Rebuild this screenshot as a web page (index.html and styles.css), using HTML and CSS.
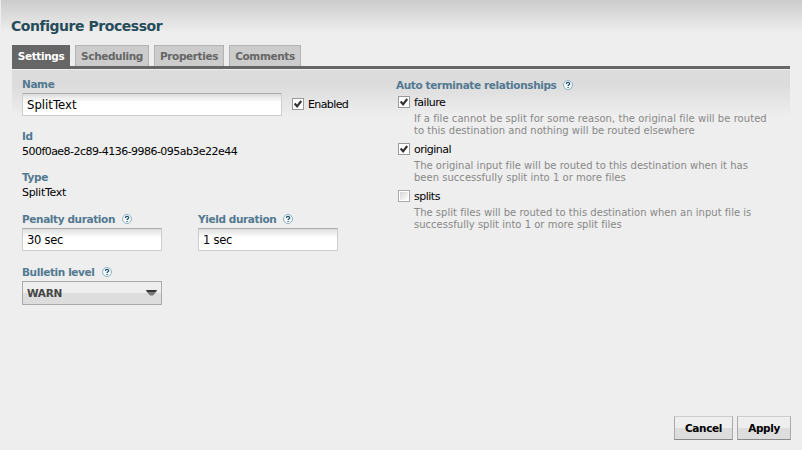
FILE: index.html
```html
<!DOCTYPE html>
<html lang="en">
<head>
<meta charset="utf-8">
<title>Configure Processor</title>
<link rel="stylesheet" href="styles.css">
</head>
<body>
<svg class="defs" aria-hidden="true">
  <symbol id="help" viewBox="0 0 10 10">
    <circle cx="5" cy="5" r="4.5" fill="#f4f9fb" stroke="#8fb2c3"/>
    <path d="M3.4 3.9C3.4 1.9 6.7 1.9 6.7 3.7C6.7 4.7 5.1 4.8 5.1 6" fill="none" stroke="#1f5068" stroke-width="1.2"/>
    <path d="M4.5 7h1.2v1.1H4.5z" fill="#1f5068"/>
  </symbol>
  <symbol id="check" viewBox="0 0 12 12">
    <path d="M2.6 5.6L5.1 8.3L9.2 3" fill="none" stroke="#333" stroke-width="2.2"/>
  </symbol>
</svg>
<main class="dialog">
  <h1 class="title">Configure Processor</h1>
  <nav class="tabs">
    <span class="tab tab-settings active">Settings</span>
    <span class="tab tab-scheduling">Scheduling</span>
    <span class="tab tab-properties">Properties</span>
    <span class="tab tab-comments">Comments</span>
  </nav>
  <div class="panel">
    <section class="left">
      <div class="label">Name</div>
      <div class="name-row">
        <div class="input name-input">SplitText</div>
        <span class="checkbox"><svg><use href="#check"/></svg></span>
        <span class="enabled">Enabled</span>
      </div>
      <div class="readonly">
        <div class="label">Id</div>
        <div class="value">500f0ae8-2c89-4136-9986-095ab3e22e44</div>
      </div>
      <div class="readonly">
        <div class="label">Type</div>
        <div class="value value-type">SplitText</div>
      </div>
      <div class="durations">
        <div class="field">
          <div class="label"><span>Penalty duration</span><svg class="help"><use href="#help"/></svg></div>
          <div class="input duration">30 sec</div>
        </div>
        <div class="field">
          <div class="label"><span>Yield duration</span><svg class="help"><use href="#help"/></svg></div>
          <div class="input duration">1 sec</div>
        </div>
      </div>
      <div class="field bulletin">
        <div class="label"><span>Bulletin level</span><svg class="help"><use href="#help"/></svg></div>
        <div class="select"><span>WARN</span><svg class="arrow" viewBox="0 0 11 6"><path d="M0 0h11v1L7 5.5H4L0 1z" fill="#777"/><path d="M0 0h11L9 2H2z" fill="#333"/></svg></div>
      </div>
    </section>
    <section class="right">
      <div class="label"><span>Auto terminate relationships</span><svg class="help"><use href="#help"/></svg></div>
      <div class="relation">
        <div class="relation-name"><span class="checkbox"><svg><use href="#check"/></svg></span><span>failure</span></div>
        <p class="description"><span class="wide">If a file cannot be split for some reason, the original file will be routed</span><br>to this destination and nothing will be routed elsewhere</p>
      </div>
      <div class="relation">
        <div class="relation-name"><span class="checkbox"><svg><use href="#check"/></svg></span><span>original</span></div>
        <p class="description">The original input file will be routed to this destination when it has<br>been successfully split into 1 or more files</p>
      </div>
      <div class="relation">
        <div class="relation-name"><span class="checkbox empty"></span><span>splits</span></div>
        <p class="description">The split files will be routed to this destination when an input file is<br>successfully split into 1 or more split files</p>
      </div>
    </section>
  </div>
  <footer class="actions">
    <div class="button cancel">Cancel</div>
    <div class="button apply">Apply</div>
  </footer>
</main>
</body>
</html>
```
FILE: styles.css
```css
* { box-sizing: border-box; }
body {
  margin: 0;
  background: #eee;
  font-family: Verdana, "DejaVu Sans", sans-serif;
  font-size: 11px;
  color: #000;
}
.defs { display: none; }
.dialog {
  height: 450px;
  padding: 17px 12px 10px;
  display: flex;
  flex-direction: column;
  background: linear-gradient(#ccc, #eee 33px) 1px 0 / 801px 33px no-repeat;
}
.title {
  margin: 0 0 10px -1px;
  height: 18px;
  line-height: 18px;
  font-size: 14px;
  font-weight: bold;
  letter-spacing: -0.45px;
  color: #264c5a;
}
.tabs {
  display: flex;
  gap: 5px;
  height: 24px;
  width: 778px;
  border-bottom: 3px solid #666;
}
.tab {
  height: 21px;
  border: 1px solid #b3b3b3;
  border-width: 1px 1px 0;
  background: #ccc;
  color: #666;
  font-size: 10.5px;
  letter-spacing: -0.38px;
  font-weight: bold;
  line-height: 21px;
  text-align: center;
  white-space: nowrap;
}
.tab-settings { width: 58px; }
.tab-scheduling { width: 74px; }
.tab-properties { width: 70px; }
.tab-comments { width: 72px; }
.active { background: #666; border-color: #666; color: #fff; }
.panel {
  width: 778px;
  margin-top: 1px;
  padding: 8px 10px 0;
  flex: 1;
  display: flex;
  background: linear-gradient(#dcdcdc, #dcdcdc 15px, #eee 46px);
}
.left { width: 374px; }
.label {
  height: 15px;
  line-height: 12px;
  font-size: 10.5px;
  letter-spacing: -0.38px;
  font-weight: bold;
  color: #527991;
  display: flex;
  align-items: flex-start;
  white-space: nowrap;
}
.help { width: 10px; height: 10px; margin: 1px 0 0 7px; }
.name-row { display: flex; height: 23px; }
.input {
  width: 140px;
  height: 23px;
  padding-left: 4px;
  border: 1px solid #ccc;
  border-top: 1px solid #aaa;
  background: linear-gradient(#ddd, #fff 8px);
  font-size: 11.7px;
  line-height: 23px;
}
.duration { font-size: 11.5px; letter-spacing: -0.25px; }
.name-input { width: 260px; }
.checkbox {
  width: 12px;
  height: 12px;
  border: 1px solid #999;
  background: #fff;
  flex: none;
}
.checkbox svg { display: block; width: 12px; height: 12px; margin: -1px; }
.empty {
  padding: 1px;
  border-color: #aaa;
  background: linear-gradient(135deg, #d5d5d5, #fff) content-box, #fff;
}
.name-row .checkbox { margin: 5px 4px 0 10px; }
.enabled { line-height: 23px; letter-spacing: -0.6px; }
.readonly { height: 41px; margin-top: 13px; }
.readonly + .readonly { margin-top: 0; }
.readonly .label { line-height: 14px; }
.value { line-height: 15px; letter-spacing: -0.54px; }
.value-type { letter-spacing: -0.3px; }
.durations { display: flex; gap: 36px; margin-top: 2px; }
.bulletin { margin-top: 15px; }
.select {
  width: 140px;
  height: 24px;
  padding: 0 4px;
  border: 1px solid #aaa;
  background: linear-gradient(#eee 50%, #ddd 50%);
  color: #454545;
  font-size: 10.5px;
  letter-spacing: -0.3px;
  font-weight: bold;
  display: flex;
  align-items: center;
  justify-content: space-between;
}
.arrow { width: 11px; height: 6px; }
.right .label { line-height: 14px; }
.right .help { margin-top: 2px; }
.relation { height: 47px; }
.relation-name {
  display: flex;
  gap: 4px;
  height: 18px;
  padding: 3px 0 0 2px;
  line-height: 14px;
  letter-spacing: -0.5px;
}
.description {
  margin: 2px 0 0 18px;
  color: #888;
  font-size: 10px;
  line-height: 12px;
  letter-spacing: 0.02px;
  white-space: nowrap;
}
.wide { letter-spacing: 0.05px; }
.actions { display: flex; justify-content: flex-end; gap: 4px; margin-right: -1px; }
.button {
  height: 24px;
  border: 1px solid #aaa;
  border-top-color: #ccc;
  border-bottom-color: #888;
  background: linear-gradient(#eee 50%, #ddd 50%);
  font-size: 10.5px;
  letter-spacing: -0.38px;
  font-weight: bold;
  line-height: 23px;
  text-align: center;
}
.cancel { width: 59px; }
.apply { width: 54px; }
```
